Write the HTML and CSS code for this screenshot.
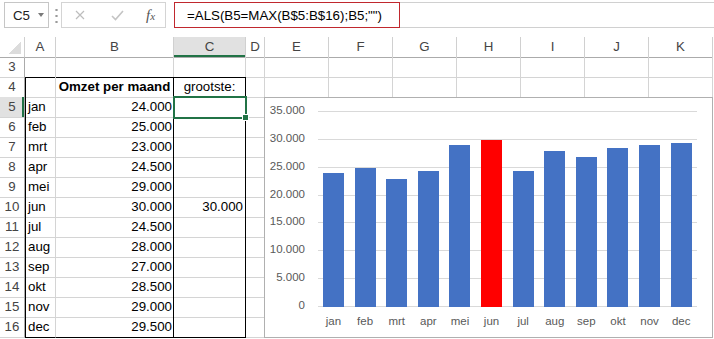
FILE: index.html
```html
<!DOCTYPE html>
<html>
<head>
  <title>Omzet per maand</title>
  <link rel="stylesheet" href="styles.css">
</head>
<body>

<div class="formula-bar">
  <div class="name-box">C5 <span class="arrow"></span></div>
  <div class="grip"></div>
  <div class="fx-buttons">
    <svg class="cross" width="10" height="10" viewBox="0 0 10 10">
      <path d="M1 1L9 9M9 1L1 9" stroke="#bdbdbd" stroke-width="1.2" fill="none"/>
    </svg>
    <svg class="check" width="13" height="11" viewBox="0 0 13 11">
      <path d="M1 6L4.5 9.5L12 1" stroke="#c4c4c4" stroke-width="1.6" fill="none"/>
    </svg>
    <span class="fx">f<span class="fx-x">x</span></span>
  </div>
  <div class="formula">
    <span class="formula-text">=ALS(B5=MAX(B$5:B$16);B5;"")</span>
  </div>
</div>

<div class="sheet">
  <div class="row head">
    <div class="corner"><span class="tri"></span></div>
    <div>A</div><div>B</div><div class="sel-col">C</div><div>D</div>
    <div>E</div><div>F</div><div>G</div><div>H</div><div>I</div><div>J</div><div>K</div>
  </div>

  <div class="row">
    <div class="rh">3</div>
    <div class="above"></div><div class="above"></div><div class="above"></div>
    <div></div><div></div><div></div><div></div><div></div><div></div><div></div><div></div>
  </div>
  <div class="row">
    <div class="rh">4</div>
    <div class="a"></div><div class="b ctr bold">Omzet per maand</div><div class="c ctr">grootste:</div>
    <div></div><div></div><div></div><div></div><div></div><div></div><div></div><div></div>
  </div>
  <div class="row">
    <div class="rh sel-row">5</div>
    <div class="a">jan</div><div class="b">24.000</div><div class="c active"></div>
    <div></div><div></div><div></div><div></div><div></div><div></div><div></div><div></div>
  </div>
  <div class="row">
    <div class="rh">6</div>
    <div class="a">feb</div><div class="b">25.000</div><div class="c"></div>
    <div></div><div></div><div></div><div></div><div></div><div></div><div></div><div></div>
  </div>
  <div class="row">
    <div class="rh">7</div>
    <div class="a">mrt</div><div class="b">23.000</div><div class="c"></div>
    <div></div><div></div><div></div><div></div><div></div><div></div><div></div><div></div>
  </div>
  <div class="row">
    <div class="rh">8</div>
    <div class="a">apr</div><div class="b">24.500</div><div class="c"></div>
    <div></div><div></div><div></div><div></div><div></div><div></div><div></div><div></div>
  </div>
  <div class="row">
    <div class="rh">9</div>
    <div class="a">mei</div><div class="b">29.000</div><div class="c"></div>
    <div></div><div></div><div></div><div></div><div></div><div></div><div></div><div></div>
  </div>
  <div class="row">
    <div class="rh">10</div>
    <div class="a">jun</div><div class="b">30.000</div><div class="c">30.000</div>
    <div></div><div></div><div></div><div></div><div></div><div></div><div></div><div></div>
  </div>
  <div class="row">
    <div class="rh">11</div>
    <div class="a">jul</div><div class="b">24.500</div><div class="c"></div>
    <div></div><div></div><div></div><div></div><div></div><div></div><div></div><div></div>
  </div>
  <div class="row">
    <div class="rh">12</div>
    <div class="a">aug</div><div class="b">28.000</div><div class="c"></div>
    <div></div><div></div><div></div><div></div><div></div><div></div><div></div><div></div>
  </div>
  <div class="row">
    <div class="rh">13</div>
    <div class="a">sep</div><div class="b">27.000</div><div class="c"></div>
    <div></div><div></div><div></div><div></div><div></div><div></div><div></div><div></div>
  </div>
  <div class="row">
    <div class="rh">14</div>
    <div class="a">okt</div><div class="b">28.500</div><div class="c"></div>
    <div></div><div></div><div></div><div></div><div></div><div></div><div></div><div></div>
  </div>
  <div class="row">
    <div class="rh">15</div>
    <div class="a">nov</div><div class="b">29.000</div><div class="c"></div>
    <div></div><div></div><div></div><div></div><div></div><div></div><div></div><div></div>
  </div>
  <div class="row">
    <div class="rh">16</div>
    <div class="a last">dec</div><div class="b last">29.500</div><div class="c last"></div>
    <div></div><div></div><div></div><div></div><div></div><div></div><div></div><div></div>
  </div>

  <!-- chart floats over E5:K16 -->
  <div class="chart">
    <div class="y-axis">
      <div>35.000</div><div>30.000</div><div>25.000</div><div>20.000</div>
      <div>15.000</div><div>10.000</div><div>5.000</div><div>0</div>
    </div>
    <div class="plot-area">
      <div class="bars">
        <div class="slot"><div class="bar" style="height: 133.7px"></div></div>
        <div class="slot"><div class="bar" style="height: 139.3px"></div></div>
        <div class="slot"><div class="bar" style="height: 128.1px"></div></div>
        <div class="slot"><div class="bar" style="height: 136.5px"></div></div>
        <div class="slot"><div class="bar" style="height: 161.6px"></div></div>
        <div class="slot"><div class="bar max" style="height: 167.1px"></div></div>
        <div class="slot"><div class="bar" style="height: 136.5px"></div></div>
        <div class="slot"><div class="bar" style="height: 156px"></div></div>
        <div class="slot"><div class="bar" style="height: 150.4px"></div></div>
        <div class="slot"><div class="bar" style="height: 158.8px"></div></div>
        <div class="slot"><div class="bar" style="height: 161.6px"></div></div>
        <div class="slot"><div class="bar" style="height: 164.4px"></div></div>
      </div>
      <div class="x-axis">
        <div>jan</div><div>feb</div><div>mrt</div><div>apr</div><div>mei</div><div>jun</div>
        <div>jul</div><div>aug</div><div>sep</div><div>okt</div><div>nov</div><div>dec</div>
      </div>
    </div>
  </div>
</div>

</body>
</html>
```

FILE: styles.css
```css
body {
  margin: 0;
  width: 714px;
  height: 339px;
  overflow: hidden;
  background: #fff;
  font-family: 'Liberation Sans', Arial, sans-serif;
  font-size: 13.3px;
  color: #000;
}

/* formula bar */
.formula-bar {
  display: flex;
  align-items: flex-start;
  height: 37px;
  padding-top: 2px;
  box-sizing: border-box;
}
.name-box {
  display: flex;
  align-items: center;
  margin-left: 4px;
  width: 45px;
  height: 26px;
  padding-left: 8px;
  border: 1px solid #c6c6c6;
  box-sizing: border-box;
  color: #222;
}
.arrow {
  margin-left: auto;
  margin-right: 4px;
  border-left: 3.5px solid transparent;
  border-right: 3.5px solid transparent;
  border-top: 4px solid #7a7a7a;
}
.grip {
  margin-left: 6px;
  margin-top: 5px;
  width: 3px;
  height: 18px;
  background: radial-gradient(circle, #9a9a9a 1px, transparent 1.3px) 0 0 / 3px 6px repeat-y;
}
.fx-buttons {
  display: flex;
  align-items: center;
  margin-left: 3px;
  width: 105px;
  height: 26px;
  padding-left: 13px;
  border: 1px solid #d4d4d4;
  box-sizing: border-box;
}
.check {
  margin-left: 26px;
}
.fx {
  margin-left: 22px;
  font-family: 'Liberation Serif', serif;
  font-style: italic;
  font-size: 15px;
  color: #555;
}
.fx-x {
  font-size: 11px;
}
.formula {
  display: flex;
  flex: 1;
  margin-left: 8px;
  height: 26px;
  border-top: 1px solid #d0d0d0;
  border-bottom: 1px solid #d0d0d0;
  box-sizing: border-box;
}
.formula-text {
  margin: -1px 0;
  width: 226px;
  height: 26px;
  padding-left: 12px;
  line-height: 25px;
  border: 1px solid #c0282e;
  box-sizing: border-box;
}

/* sheet grid */
.sheet {
  position: relative;
}
.row {
  display: grid;
  grid-template-columns: 25px 31px 118px 72px 19px repeat(7, 64px);
  height: 20px;
}
.row > div {
  border-right: 1px solid #d4d4d4;
  border-bottom: 1px solid #d4d4d4;
  box-sizing: border-box;
  line-height: 20px;
  white-space: nowrap;
}
.head > div {
  text-align: center;
  color: #444;
  border-right-color: #d0d0d0;
  border-bottom-color: #ababab;
}
.head .sel-col {
  background: #e1e1e1;
  box-shadow: inset 0 -2px #217346;
}
.corner {
  position: relative;
}
.tri {
  position: absolute;
  right: 3px;
  bottom: 3px;
  width: 12px;
  height: 12px;
  background: linear-gradient(to bottom right, transparent 50%, #dcdcdc 50%);
}
.row .rh {
  text-align: center;
  color: #444;
  border-right-color: #ababab;
}
.row .sel-row {
  background: #e1e1e1;
  box-shadow: inset -2px 0 #217346;
}

/* the table A4:C16 */
.row .above {
  border-bottom-color: #000;
}
.row .a {
  padding-left: 3px;
  box-shadow: inset 1px 0 #000;
}
.row .b {
  text-align: right;
  padding-right: 1px;
  border-right-color: #000;
}
.row .c {
  text-align: right;
  padding-right: 2px;
  border-right-color: #000;
}
.row .ctr {
  text-align: center;
  padding: 0;
}
.bold {
  font-weight: bold;
}
.row .last {
  border-bottom-color: #000;
}
.row .active {
  position: relative;
  outline: 2px solid #217346;
  outline-offset: -1px;
}
.active::after {
  content: "";
  position: absolute;
  right: -4px;
  bottom: -4px;
  width: 5px;
  height: 5px;
  background: #217346;
  border: 1px solid #fff;
}

/* chart */
.chart {
  position: absolute;
  left: 264px;
  top: 60px;
  width: 449px;
  height: 241px;
  display: flex;
  background: #fff;
  border: 1px solid #b0b0b0;
  box-sizing: border-box;
  font-size: 11.5px;
  color: #595959;
}
.y-axis {
  width: 40px;
  margin-top: -1px;
  text-align: right;
}
.y-axis div {
  height: 27.857px;
  line-height: 27.857px;
}
.plot-area {
  margin-left: 12.7px;
  width: 379.3px;
}
.bars {
  display: flex;
  align-items: flex-end;
  margin-top: 13px;
  height: 196px;
  background: repeating-linear-gradient(#d9d9d9 0 1px, transparent 1px 27.857px);
}
.slot {
  flex: 1;
  display: flex;
  justify-content: center;
}
.bar {
  width: 21px;
  background: #4472c4;
}
.bar.max {
  background: #ff0000;
}
.x-axis {
  display: flex;
  height: 28px;
  line-height: 28px;
}
.x-axis div {
  flex: 1;
  text-align: center;
}
```
